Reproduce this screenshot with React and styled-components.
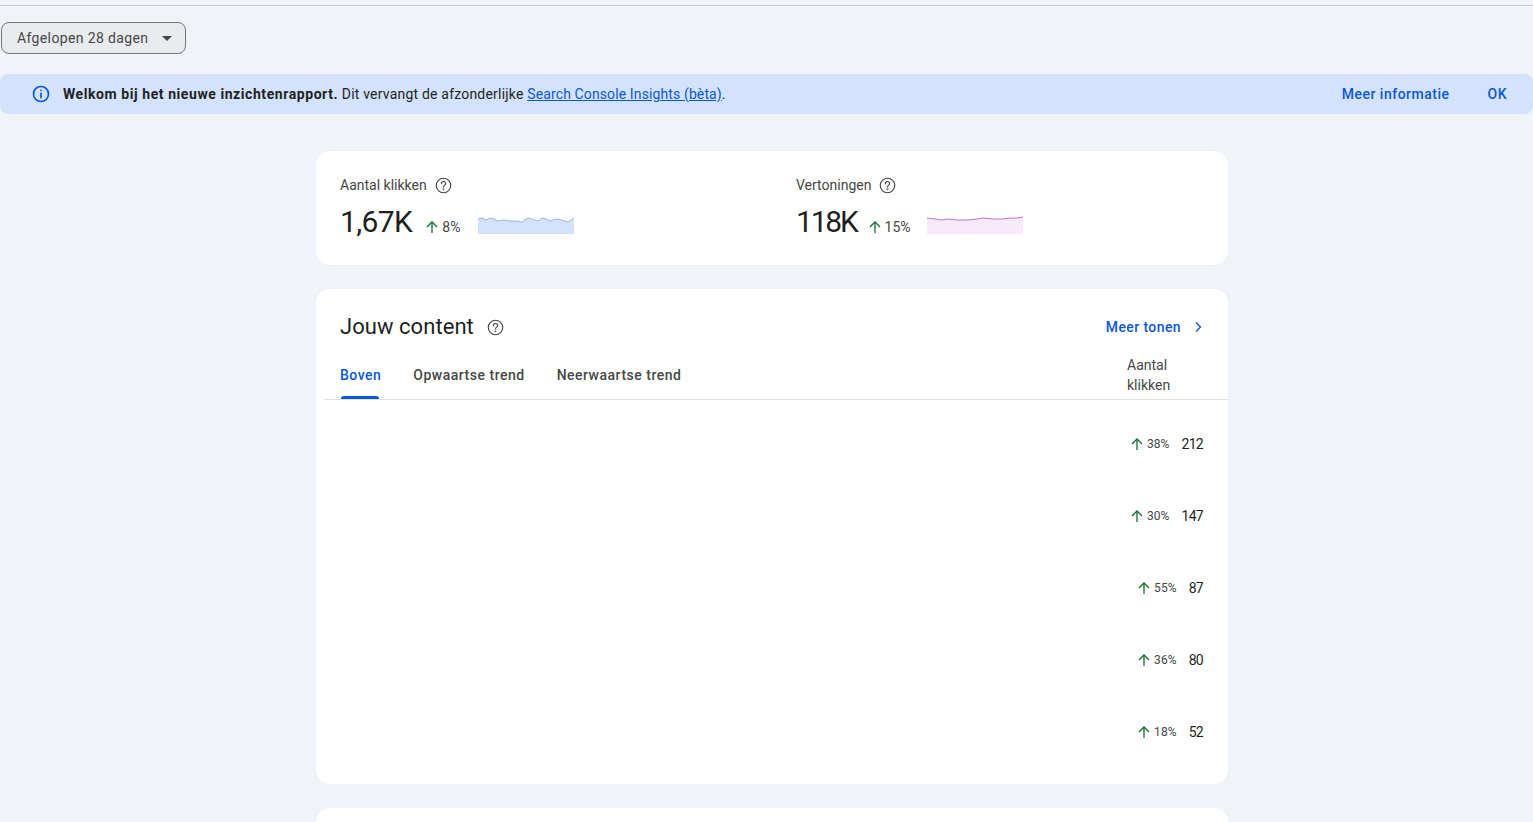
import React from 'react';
import styled, { createGlobalStyle } from 'styled-components';

const GlobalStyle = createGlobalStyle`
  html, body {
    margin: 0;
    height: 822px;
    overflow: hidden;
    background: #f0f4f9;
    font-family: Roboto, "Liberation Sans", sans-serif;
    color: #1f1f1f;
  }
`

const Page = styled.div`
  height: 822px;
  overflow: hidden;
  padding-top: 5px;
  box-sizing: border-box;
`
const TopLine = styled.div`
  height: 1px;
  background: #c9ccd1;
`
const FilterBar = styled.div`
  display: flex;
  padding: 16px 0 20px 1px;
`
const Filter = styled.button`
  display: flex;
  align-items: center;
  justify-content: space-between;
  width: 185px;
  height: 32px;
  padding: 0 13px 0 15px;
  box-sizing: border-box;
  background: #e9ebee;
  border: 1px solid #747775;
  border-radius: 8px;
  font: inherit;
  font-size: 14px;
  letter-spacing: 0.37px;
  color: #444746;
`
const Caret = styled.span`
  width: 0;
  height: 0;
  border-left: 5px solid transparent;
  border-right: 5px solid transparent;
  border-top: 5px solid #444746;
`
const Banner = styled.div`
  display: flex;
  align-items: center;
  height: 40px;
  padding: 0 26px 0 32px;
  background: #d3e3fd;
  border-radius: 8px;
  font-size: 14px;
  letter-spacing: 0.2px;
`
const BannerText = styled.div`
  flex: 1;
  margin-left: 13px;
  b { font-weight: 700; letter-spacing: 0.57px; }
  a { color: #0b57d0; text-decoration: underline; letter-spacing: 0.12px; }
`
const BannerAction = styled.a`
  margin-left: ${p => p.$gap}px;
  color: #0b57d0;
  font-weight: 500;
  letter-spacing: 0.5px;
`
const Column = styled.main`
  display: flex;
  flex-direction: column;
  gap: 24px;
  width: 912px;
  margin: 37px 0 0 316px;
`
const Card = styled.section`
  background: #fff;
  border-radius: 14px;
  box-shadow: 0 0 2px rgba(60, 64, 67, 0.06);
`
const MetricsCard = styled(Card)`
  display: grid;
  grid-template-columns: 456px 1fr;
  height: 114px;
  padding: 24px 0 0 24px;
  box-sizing: border-box;
`
const MetricLabel = styled.div`
  display: flex;
  align-items: center;
  gap: 8px;
  height: 20px;
  font-size: 14px;
  color: #444746;
`
const MetricRow = styled.div`
  display: flex;
  align-items: center;
  margin-top: 7px;
  height: 38px;
`
const MetricValue = styled.div`
  font-size: 30px;
  letter-spacing: ${p => p.$spacing}px;
  color: #1f1f1f;
`
const Delta = styled.div`
  display: flex;
  align-items: center;
  gap: 3px;
  font-size: 12px;
  letter-spacing: 0.1px;
  color: #444746;
`
const MetricDelta = styled(Delta)`
  margin: 12px ${p => p.$after}px 0 ${p => p.$before}px;
  font-size: 14px;
  letter-spacing: 0;
`
const SparkSvg = styled.svg`
  flex-shrink: 0;
  margin-top: 8px;
`
const ContentCard = styled(Card)`
  height: 495px;
`
const CardHead = styled.header`
  display: flex;
  align-items: center;
  justify-content: space-between;
  padding: 24px 22px 0 24px;
  height: 28px;
`
const TitleWrap = styled.div`
  display: flex;
  align-items: center;
  gap: 13px;
`
const Title = styled.h2`
  margin: 0;
  font-size: 22px;
  font-weight: 400;
  line-height: 28px;
  letter-spacing: 0.05px;
  color: #1f1f1f;
`
const MoreLink = styled.a`
  display: flex;
  align-items: center;
  gap: 9px;
  font-size: 14px;
  font-weight: 500;
  letter-spacing: 0.4px;
  color: #0b57d0;
`
const TabBar = styled.div`
  display: flex;
  justify-content: space-between;
  height: 47px;
  margin: 11px 0 0 8px;
  padding: 0 0 0 16px;
  border-bottom: 1px solid #e3e3e3;
`
const Tabs = styled.div`
  display: flex;
  gap: 32px;
`
const Tab = styled.div`
  position: relative;
  padding-top: 13px;
  font-size: 14px;
  font-weight: 500;
  letter-spacing: 0.5px;
  line-height: 20px;
  color: ${p => p.$active ? '#0b57d0' : '#444746'};
  ${p => p.$active && `
    &::after {
      content: '';
      position: absolute;
      left: 1px;
      right: 2px;
      bottom: 0;
      height: 3px;
      border-radius: 3px 3px 0 0;
      background: #0b57d0;
    }
  `}
`
const ColumnHead = styled.div`
  width: 101px;
  padding-top: 3px;
  font-size: 14px;
  line-height: 20px;
  color: #444746;
`
const Rows = styled.div`
  display: flex;
  flex-direction: column;
  padding-top: 8px;
`
const Row = styled.div`
  display: flex;
  align-items: center;
  justify-content: flex-end;
  gap: 12px;
  height: 72px;
  padding-right: 25px;
`
const RowValue = styled.div`
  font-size: 14px;
  letter-spacing: -0.7px;
  color: #1f1f1f;
`
const PartialCard = styled(Card)`
  height: 80px;
  flex-shrink: 0;
`

const HelpIcon = ({ size = 17 }) => (
  <svg width={size} height={size} viewBox="0 0 24 24" fill="none" stroke="#444746" strokeWidth="1.6" strokeLinecap="round">
    <circle cx="12" cy="12" r="10.2" />
    <path d="M9 9.4a3 3 0 0 1 6 0c0 2-3 2.3-3 4.6" />
    <circle cx="12" cy="17.4" r="0.5" fill="#444746" />
  </svg>
)

const InfoIcon = () => (
  <svg width="18" height="18" viewBox="0 0 24 24" fill="none" stroke="#0b57d0" strokeWidth="2.2" strokeLinecap="round">
    <circle cx="12" cy="12" r="10" />
    <path d="M12 11v6" />
    <path d="M12 7.2v.2" />
  </svg>
)

const ArrowUp = ({ size = 14 }) => (
  <svg width={size} height={size} viewBox="0 0 14 14" fill="none" stroke="#146c2e" strokeWidth="1.3">
    <path d="M7 13V2" />
    <path d="M2 7l5-5 5 5" />
  </svg>
)

const ChevronRight = () => (
  <svg width="16" height="16" viewBox="0 0 16 16" fill="none" stroke="#0b57d0" strokeWidth="1.4">
    <path d="M6 3.5L10.5 8 6 12.5" />
  </svg>
)

const Sparkline = ({ line, fill, stroke }) => (
  <SparkSvg width="96" height="18" viewBox="0 0 96 18">
    <path d={`${line} L96 18 L0 18 Z`} fill={fill} />
    <path d={line} fill="none" stroke={stroke} strokeWidth="0.9" />
  </SparkSvg>
)

const clicksLine = 'M0 3 L4 2 L8 4 L12 2 L16 3 L20 5 L26 4 L32 5 L38 5 L44 6 L48 3 L52 2 L56 4 L60 5 L64 2 L68 3 L72 5 L78 3 L84 4 L90 6 L96 2'
const viewsLine = 'M0 2 L8 3 L14 4 L20 3 L30 4 L40 4 L50 3 L56 2 L66 3 L76 3 L84 2 L90 2 L96 1'

const rows = [
  { pct: '38%', clicks: '212' },
  { pct: '30%', clicks: '147' },
  { pct: '55%', clicks: '87' },
  { pct: '36%', clicks: '80' },
  { pct: '18%', clicks: '52' },
]

const App = () => (
  <Page>
    <GlobalStyle />
    <TopLine />
    <FilterBar>
      <Filter>Afgelopen 28 dagen<Caret /></Filter>
    </FilterBar>
    <Banner>
      <InfoIcon />
      <BannerText>
        <b>Welkom bij het nieuwe inzichtenrapport.</b> Dit vervangt de afzonderlijke <a>Search Console Insights (bèta)</a>.
      </BannerText>
      <BannerAction>Meer informatie</BannerAction>
      <BannerAction $gap={38}>OK</BannerAction>
    </Banner>
    <Column>
      <MetricsCard>
        <div>
          <MetricLabel>Aantal klikken <HelpIcon /></MetricLabel>
          <MetricRow>
            <MetricValue $spacing={-0.6}>1,67K</MetricValue>
            <MetricDelta $before={13} $after={18}><ArrowUp />8%</MetricDelta>
            <Sparkline line={clicksLine} fill="#d3e3fd" stroke="#8fb0e0" />
          </MetricRow>
        </div>
        <div>
          <MetricLabel>Vertoningen <HelpIcon /></MetricLabel>
          <MetricRow>
            <MetricValue $spacing={-2.2}>118K</MetricValue>
            <MetricDelta $before={11} $after={16}><ArrowUp />15%</MetricDelta>
            <Sparkline line={viewsLine} fill="#f6e9fa" stroke="#b06cc0" />
          </MetricRow>
        </div>
      </MetricsCard>
      <ContentCard>
        <CardHead>
          <TitleWrap>
            <Title>Jouw content</Title>
            <HelpIcon />
          </TitleWrap>
          <MoreLink>Meer tonen <ChevronRight /></MoreLink>
        </CardHead>
        <TabBar>
          <Tabs>
            <Tab $active>Boven</Tab>
            <Tab>Opwaartse trend</Tab>
            <Tab>Neerwaartse trend</Tab>
          </Tabs>
          <ColumnHead>Aantal<br />klikken</ColumnHead>
        </TabBar>
        <Rows>
          {rows.map(row => (
            <Row key={row.clicks}>
              <Delta><ArrowUp />{row.pct}</Delta>
              <RowValue>{row.clicks}</RowValue>
            </Row>
          ))}
        </Rows>
      </ContentCard>
      <PartialCard />
    </Column>
  </Page>
)

export default App
